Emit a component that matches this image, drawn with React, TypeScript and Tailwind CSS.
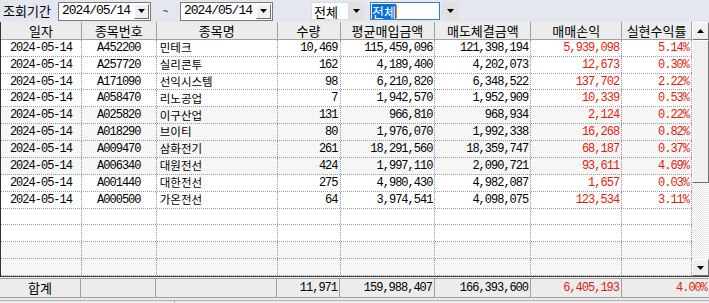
const cols = [
  { w: 'w-[81px]', title: '일자' },
  { w: 'w-[75px]', title: '종목번호' },
  { w: 'w-[121px]', title: '종목명' },
  { w: 'w-[63px]', title: '수량' },
  { w: 'w-[95px]', title: '평균매입금액' },
  { w: 'w-[96px]', title: '매도체결금액' },
  { w: 'w-[91px]', title: '매매손익' },
  { w: 'w-[70px]', title: '실현수익률' },
]

const rows = [
  ['2024-05-14', 'A452200', '민테크', '10,469', '115,459,096', '121,398,194', '5,939,098', '5.14%'],
  ['2024-05-14', 'A257720', '실리콘투', '162', '4,189,400', '4,202,073', '12,673', '0.30%'],
  ['2024-05-14', 'A171090', '선익시스템', '98', '6,210,820', '6,348,522', '137,702', '2.22%'],
  ['2024-05-14', 'A058470', '리노공업', '7', '1,942,570', '1,952,909', '10,339', '0.53%'],
  ['2024-05-14', 'A025820', '이구산업', '131', '966,810', '968,934', '2,124', '0.22%'],
  ['2024-05-14', 'A018290', '브이티', '80', '1,976,070', '1,992,338', '16,268', '0.82%'],
  ['2024-05-14', 'A009470', '삼화전기', '261', '18,291,560', '18,359,747', '68,187', '0.37%'],
  ['2024-05-14', 'A006340', '대원전선', '424', '1,997,110', '2,090,721', '93,611', '4.69%'],
  ['2024-05-14', 'A001440', '대한전선', '275', '4,980,430', '4,982,087', '1,657', '0.03%'],
  ['2024-05-14', 'A000500', '가온전선', '64', '3,974,541', '4,098,075', '123,534', '3.11%'],
]

const kr = "font-['Noto_Sans_CJK_KR',sans-serif]"
const mono = "font-['Liberation_Mono','Noto_Sans_CJK_KR',monospace] text-[12px] tracking-[-1px]"

function cellClass(i: number) {
  if (i === 0 || i === 1) return `${mono} justify-center text-black`
  if (i === 2) return `${kr} text-[11.5px] justify-start pl-[3px] text-black`
  if (i >= 6) return `${mono} justify-end pr-[2px] text-[#e31b0c]`
  return `${mono} justify-end pr-[2px] text-black`
}

function Tri({ up }: { up?: boolean }) {
  return (
    <svg width="7" height="4" viewBox="0 0 7 4">
      <path d={up ? 'M0 4L3.5 0L7 4Z' : 'M0 0L7 0L3.5 4Z'} fill="#000" />
    </svg>
  )
}

function RaisedBtn({ up, className }: { up?: boolean; className: string }) {
  return (
    <div className={`flex items-center justify-center bg-[#f0f0f0] border border-t-white border-l-white border-b-[#6e6e6e] border-r-[#6e6e6e] ${className}`}>
      <Tri up={up} />
    </div>
  )
}

function DateBox() {
  return (
    <div className="flex items-center h-[19px] w-[93px] bg-white border border-[#7a7a7a]">
      <span className={`${mono} text-[13px] pl-[3px] flex-1`}>2024/05/14</span>
      <RaisedBtn className="w-[15px] h-[15px] mr-[1px]" />
    </div>
  )
}

export default function App() {
  const empty = [0, 1, 2, 3]
  return (
    <div className="w-[709px] h-[303px] overflow-hidden bg-[#ebebeb] flex flex-col">
      <div className="h-[22px] bg-[#e4e7ef] flex items-center">
        <span className={`${kr} text-[13px] ml-[3px] w-[55px]`}>조회기간</span>
        <DateBox />
        <span className="w-[29px] text-center text-[10px] text-[#333]">~</span>
        <DateBox />
        <div className="ml-[38px] flex items-center h-[18px]">
          <div className={`${kr} text-[13px] bg-white h-[18px] w-[38px] pl-[2px] leading-[18px] border border-[#dcdcdc]`}>전체</div>
          <div className="w-[15px] h-[18px] bg-[#e1e1e1] flex items-center justify-center"><Tri /></div>
        </div>
        <div className="ml-[6px] flex items-center h-[18px]">
          <div className="bg-white h-[18px] w-[70px] border border-[#2f7fd0] flex items-center pl-[1px]">
            <span className={`${kr} text-[13px] leading-[15px] bg-[#0a6fd8] text-white`}>전체</span>
            <span className="w-[1px] h-[13px] bg-[#f07a1a]" />
          </div>
          <div className="w-[17px] h-[18px] bg-[#e1e1e1] ml-[2px] flex items-center justify-center"><Tri /></div>
        </div>
      </div>

      <div className="flex h-[255px] border-l border-l-[#333] border-b border-b-[#444]">
        <div className="w-[691px] flex flex-col bg-white">
          <div className="flex h-[18px] bg-[#ececec] border-b border-[#a0a0a0]">
            {cols.map((c, i) => (
              <div key={i} className={`${c.w} ${kr} text-[13px] flex items-center justify-center border-r border-[#a0a0a0] leading-none`}>{c.title}</div>
            ))}
          </div>
          {rows.map((r, ri) => (
            <div key={ri} className={`flex h-[17px] border-b border-dotted border-[#9a9a9a] ${ri >= 4 && ri < 8 ? 'bg-[#f6f6f6]' : 'bg-white'}`}>
              {r.map((v, i) => (
                <div key={i} className={`${cols[i].w} flex items-center leading-none border-r border-dotted border-[#9a9a9a] ${cellClass(i)}`}>{v}</div>
              ))}
            </div>
          ))}
          {empty.map((e) => (
            <div key={e} className={`flex h-[17px] border-b border-dotted border-[#9a9a9a] ${e >= 2 ? 'bg-[#f6f6f6]' : 'bg-white'}`}>
              {cols.map((c, i) => (
                <div key={i} className={`${c.w} border-r border-dotted border-[#9a9a9a]`} />
              ))}
            </div>
          ))}
        </div>
        <div className="w-[17px] flex flex-col bg-[repeating-conic-gradient(#ffffff_0_25%,#e6e6e6_0_50%)] bg-[length:2px_2px]">
          <RaisedBtn up className="h-[18px] w-[17px]" />
          <div className="h-[143px] w-[17px] bg-[#f0f0f0] border border-t-white border-l-white border-b-[#6e6e6e] border-r-[#6e6e6e]" />
          <div className="flex-1" />
          <RaisedBtn className="h-[17px] w-[17px]" />
        </div>
      </div>

      <div className="h-[1px]" />
      <div className="flex h-[20px] bg-[#ececec] border-t border-b border-[#a0a0a0]">
        <div className={`w-[81px] ${kr} text-[13px] flex items-center justify-center border-r border-[#a0a0a0]`}>합계</div>
        <div className="w-[75px] border-r border-[#a0a0a0]" />
        <div className="w-[121px] border-r border-[#a0a0a0]" />
        <div className={`w-[63px] ${mono} flex items-center justify-end pr-[2px] border-r border-[#a0a0a0]`}>11,971</div>
        <div className={`w-[95px] ${mono} flex items-center justify-end pr-[2px] border-r border-[#a0a0a0]`}>159,988,407</div>
        <div className={`w-[96px] ${mono} flex items-center justify-end pr-[2px] border-r border-[#a0a0a0]`}>166,393,600</div>
        <div className={`w-[91px] ${mono} flex items-center justify-end pr-[2px] border-r border-[#a0a0a0] text-[#e31b0c]`}>6,405,193</div>
        <div className={`flex-1 ${mono} flex items-center justify-end pr-[2px] text-[#e31b0c]`}>4.00%</div>
      </div>
      <div className="h-[2px]" />
      <div className="flex-1 flex border-t border-[#b0b0b0]">
        <div className="w-[175px] border-r border-[#b0b0b0]" />
      </div>
    </div>
  )
}
